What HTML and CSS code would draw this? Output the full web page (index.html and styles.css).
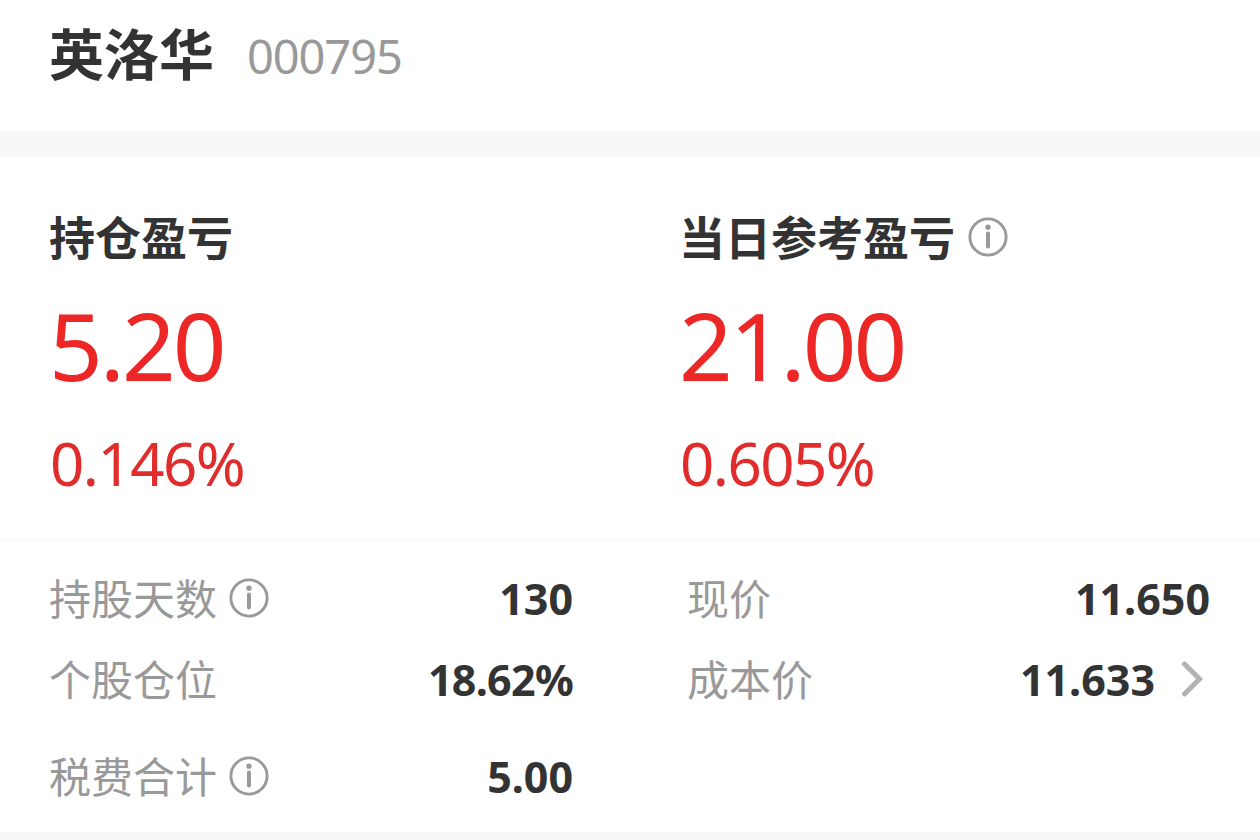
FILE: index.html
```html
<!DOCTYPE html>
<html lang="zh-CN">
<head><meta charset="utf-8"><title>英洛华</title><link rel="stylesheet" href="styles.css"></head>
<body>
<header class="stock"><h1 class="name">英洛华</h1><span class="code">000795</span></header>
<main class="panel">
<section class="summary">
<div class="metric"><h2 class="title">持仓盈亏</h2><div class="amount">5.20</div><div class="rate">0.146%</div></div>
<div class="metric"><h2 class="title">当日参考盈亏<svg class="info" viewBox="0 0 40 40"><circle cx="20" cy="20" r="18.1"/><circle class="dot" cx="20" cy="10.2" r="2.6"/><path d="M20 16.5V29.5"/></svg></h2><div class="amount">21.00</div><div class="rate">0.605%</div></div>
</section>
<section class="details">
<div class="row"><span class="label">持股天数<svg class="info" viewBox="0 0 40 40"><circle cx="20" cy="20" r="18.1"/><circle class="dot" cx="20" cy="10.2" r="2.6"/><path d="M20 16.5V29.5"/></svg></span><span class="value">130</span></div>
<div class="row"><span class="label">现价</span><span class="value">11.650</span></div>
<div class="row"><span class="label">个股仓位</span><span class="value percent">18.62%</span></div>
<div class="row"><span class="label">成本价</span><span class="value linked">11.633<svg class="chevron" viewBox="0 0 24 40"><path d="M4.5 5L19.5 20L4.5 35"/></svg></span></div>
<div class="row"><span class="label">税费合计<svg class="info" viewBox="0 0 40 40"><circle cx="20" cy="20" r="18.1"/><circle class="dot" cx="20" cy="10.2" r="2.6"/><path d="M20 16.5V29.5"/></svg></span><span class="value">5.00</span></div>
</section>
</main>
</body>
</html>
```
FILE: styles.css
```css
* { box-sizing: border-box; margin: 0; }
body { height: 840px; overflow: hidden; background: #f6f8fa; color: #333; font-family: "Noto Sans", "Noto Sans CJK SC", sans-serif; }
.stock { height: 131px; padding: 11px 49px; background: #fff; display: flex; align-items: flex-start; gap: 33px; }
.name { font: 700 55px/80px "Noto Sans CJK SC", sans-serif; }
.code { padding-top: 5px; font-size: 47px; line-height: 80px; letter-spacing: -1.1px; color: #999; }
.panel { margin-top: 26px; height: 675px; background: #fff; }
.summary { height: 384px; padding: 45px 49px 0; display: grid; grid-template-columns: 630px 1fr; border-bottom: 1px solid #f5f5f5; }
.title { display: flex; align-items: center; gap: 13px; font: 700 46px/66px "Noto Sans CJK SC", sans-serif; }
.info { width: 40px; height: 40px; margin-top: 3px; fill: none; stroke: #999; stroke-width: 2.9; stroke-linecap: round; }
.info path { stroke-width: 4; }
.info .dot { fill: #999; stroke: none; }
.amount { margin-top: 24px; color: #ed2626; font-size: 94px; line-height: 106px; letter-spacing: -3px; }
.rate { margin-top: 25px; padding-left: 1px; color: #e12c2c; font-size: 60px; line-height: 80px; letter-spacing: -1.5px; }
.details { padding: 17px 50px 0 49px; display: grid; grid-template-columns: 524px 523px; column-gap: 114px; grid-template-rows: 81px 81px 113px; }
.row { display: flex; align-items: center; justify-content: space-between; }
.label { display: flex; align-items: center; gap: 12px; padding-bottom: 4px; color: #999; font: 400 42px/60px "Noto Sans CJK SC", sans-serif; }
.value { font-weight: 700; font-size: 43px; line-height: 60px; }
.percent { letter-spacing: -0.7px; }
.linked { display: flex; align-items: center; gap: 25px; padding-right: 6px; }
.chevron { width: 24px; height: 40px; margin-bottom: 2px; fill: none; stroke: #b2b2b2; stroke-width: 5; stroke-linecap: round; }
```
